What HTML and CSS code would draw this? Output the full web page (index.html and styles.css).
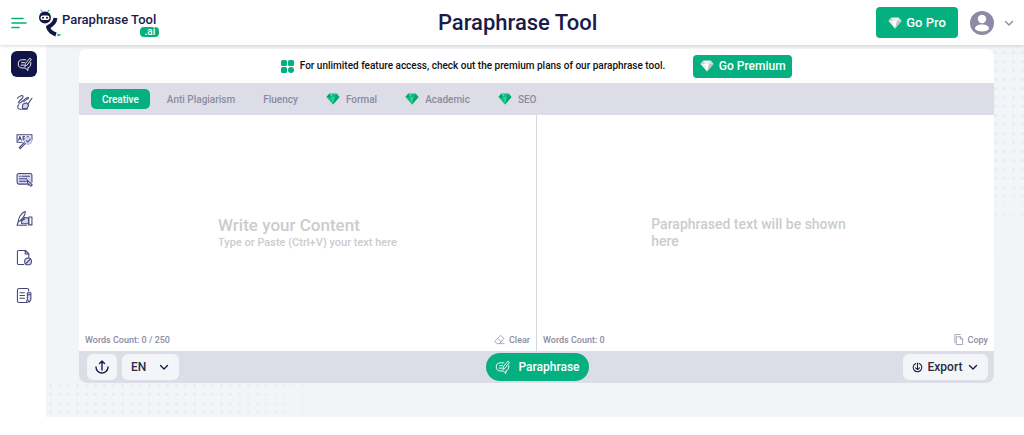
FILE: index.html
```html
<!doctype html>
<html lang="en">
<head>
  <meta charset="utf-8"/>
  <meta name="viewport" content="width=device-width, initial-scale=1"/>
  <title>Paraphrase Tool</title>
  <link rel="stylesheet" href="styles.css">
</head>
<body>
  <!-- shared icons -->
  <svg class="sprite" aria-hidden="true">
    <symbol id="gem" viewBox="0 0 28 24">
      <path d="M7 1h14l6 7-13 15L1 8z" fill="#0cbd83"/>
      <path d="M7 1l3 7H1z" fill="#069b68"/>
      <path d="M7 1h7l-4 7z" fill="#3bdcaa"/>
      <path d="M21 1l-3 7h9z" fill="#0aa873"/>
      <path d="M10 8h8l-4 15z" fill="#2fcf9d"/>
      <path d="M18 8h9L14 23z" fill="#06a36b"/>
    </symbol>
    <symbol id="gem-white" viewBox="0 0 28 24">
      <path d="M7 1h14l6 7-13 15L1 8z" fill="#eef1f0"/>
      <path d="M7 1l3 7H1z" fill="#cfd3d2"/>
      <path d="M21 1l-3 7h9z" fill="#d9dcdb"/>
      <path d="M10 8h8l-4 15z" fill="#fff"/>
      <path d="M18 8h9L14 23z" fill="#bfc5c3"/>
    </symbol>
    <symbol id="rewrite" viewBox="0 0 24 24">
      <path d="M14 4.500H8.500a6.500 6.500 0 0 0 0 13H13l4.500 4v-4.500c3-.8 4.500-3 4.500-6V9"/>
      <path d="M7.500 9H12M6.500 13h4.500"/>
      <path d="M12.500 14.500l1-4L20.500 2l2.500 2-7 9z"/>
    </symbol>
    <symbol id="chevron" viewBox="0 0 12 12">
      <path d="M2.500 4.500L6 8l3.500-3.500"/>
    </symbol>
  </svg>

  <header class="header">
    <div class="brand">
      <button class="menu" aria-label="Menu">
        <svg viewBox="0 0 16 12"><path d="M1 1.500h11M1 6h14M1 10.500h7"/></svg>
      </button>
      <a class="logo" href="#">
        <svg viewBox="0 0 24 28">
          <path d="M4.500 3.500L3 1M9.500 3.500L11 1" fill="none" stroke="#04b483" stroke-width="1"/>
          <path d="M17.500 9c-.5 4-3 7-7.500 9 1 3.500 3.500 6 8 7.500" fill="none" stroke="#141644" stroke-width="4" stroke-linecap="butt"/>
          <circle cx="7" cy="8.500" r="6" fill="#141644"/>
          <rect x="2.500" y="6.500" width="9" height="4.500" rx="2.200" fill="#fff"/>
          <circle cx="5" cy="8.700" r="1" fill="#141644"/>
          <circle cx="9" cy="8.700" r="1" fill="#141644"/>
          <path d="M19.500 24.500l4 1.500-4 1.500z" fill="#04b483"/>
        </svg>
        <span class="logo-text">
          <span class="logo-name">Paraphrase Tool</span>
          <span class="logo-tag">.ai</span>
        </span>
      </a>
    </div>
    <h1 class="title">Paraphrase Tool</h1>
    <div class="account">
      <button class="btn btn-pro"><svg class="gem"><use href="#gem-white"/></svg>Go Pro</button>
      <button class="profile" aria-label="Account">
        <svg class="avatar" viewBox="0 0 24 24">
          <circle cx="12" cy="12" r="12" fill="#8d8aa6"/>
          <circle cx="12" cy="8" r="4.200" fill="#fff"/>
          <path d="M5 18c0-3 2.500-4.500 7-4.500s7 1.500 7 4.500c-2 1.800-4 2.500-7 2.500S7 19.800 5 18z" fill="#fff"/>
        </svg>
        <svg class="chevron"><use href="#chevron"/></svg>
      </button>
    </div>
  </header>

  <div class="page">
    <nav class="sidebar" aria-label="Tools">
      <a class="tool active" href="#" aria-label="Paraphrase"><svg><use href="#rewrite"/></svg></a>
      <a class="tool" href="#" aria-label="Rewriter">
        <svg viewBox="0 0 24 24">
          <path d="M2 6c3-4 8-5 8-2S2 10 4 12.500 14 4 17 5s-4 3-6 6"/>
          <path d="M4 15c-3 3-2 6 3 7"/>
          <path class="tint" d="M9.500 14.500l5.500-2 3 3.500-3 5H9z"/>
          <path d="M17 14l5.500-8M9 21h7"/>
        </svg>
      </a>
      <a class="tool" href="#" aria-label="Grammar checker">
        <svg viewBox="0 0 24 24">
          <path d="M9 13H1.500V2.500h21V10"/>
          <path d="M3.500 10L5.500 5l2 5M4.500 8.500h2M10 5v5h2.500M10 5h2M10 7.500h2.500M18 5.500h-2.500v4"/>
          <circle class="tint pale" cx="17" cy="11" r="5"/>
          <path d="M15 11l1.500 1.500L20 9M13 15l-7 7-1.500-1.500 7-7"/>
        </svg>
      </a>
      <a class="tool" href="#" aria-label="Summarizer">
        <svg viewBox="0 0 24 24">
          <path class="tint" d="M15 18.500H4A2.500 2.500 0 0 1 1.500 16V6A2.500 2.500 0 0 1 4 3.500h16A2.500 2.500 0 0 1 22.500 6v10"/>
          <path d="M5 7.500h1M8.500 7.500H19M5 11h10M5 14.500h9"/>
          <path class="tint" d="M15.500 12.500l7.500 7-2 2-3-3-1 1.500z"/>
        </svg>
      </a>
      <a class="tool" href="#" aria-label="Essay writer">
        <svg viewBox="0 0 24 24">
          <path class="tint" d="M18 11.500l-6-1-4 5v4h10z"/>
          <path d="M18 10h4.500v11H18zM3 17C4 10 8 4 13 2c1 4-3 9-7 13zM3 17l-1.500 4.500H15M6 15l6-2"/>
        </svg>
      </a>
      <a class="tool" href="#" aria-label="Plagiarism remover">
        <svg viewBox="0 0 24 24">
          <path d="M11 22H4a2 2 0 0 1-2-2V4a2 2 0 0 1 2-2h9l5 5v5"/>
          <path class="tint" d="M13 2v5h5z"/>
          <circle class="tint" cx="17" cy="17.500" r="4.800"/>
          <path d="M13.800 20.800l6.500-6.500"/>
        </svg>
      </a>
      <a class="tool" href="#" aria-label="Article writer">
        <svg viewBox="0 0 24 24">
          <path d="M16 22H4.500A2.500 2.500 0 0 1 2 19.500v-15A2.500 2.500 0 0 1 4.500 2h11A2.500 2.500 0 0 1 18 4.500V6M16 22c-1 0-1-2-1-3"/>
          <path d="M5.500 8H12M5.500 12H12M5.500 16H12"/>
          <path class="tint" d="M16 8h5v10l-2.500 3.500L16 18zM16 11h5"/>
        </svg>
      </a>
    </nav>

    <main class="main">
      <section class="card">
        <div class="banner">
          <svg class="grid-icon" viewBox="0 0 13 13">
            <rect width="6" height="6" rx="1.500"/><rect x="7" width="6" height="6" rx="1.500"/>
            <rect y="7" width="6" height="6" rx="1.500"/><circle cx="10" cy="10" r="3"/>
          </svg>
          <p class="banner-text">For unlimited feature access, check out the premium plans of our paraphrase tool.</p>
          <button class="btn btn-premium"><svg class="gem"><use href="#gem-white"/></svg>Go Premium</button>
        </div>

        <div class="modes">
          <button class="mode selected">Creative</button>
          <button class="mode">Anti Plagiarism</button>
          <button class="mode">Fluency</button>
          <button class="mode"><svg class="gem"><use href="#gem"/></svg>Formal</button>
          <button class="mode"><svg class="gem"><use href="#gem"/></svg>Academic</button>
          <button class="mode"><svg class="gem"><use href="#gem"/></svg>SEO</button>
        </div>

        <div class="panes">
          <div class="pane">
            <div class="pane-body">
              <textarea class="input" id="content"></textarea>
              <label class="hint" for="content">
                <span class="hint-title">Write your Content</span>
                <span class="hint-text">Type or Paste (Ctrl+V) your text here</span>
              </label>
            </div>
            <div class="pane-foot">
              <span>Words Count: 0 / 250</span>
              <button class="link">
                <svg viewBox="0 0 12 12"><path d="M2 7l5-5.500L11 5 6 10.500H3.500L1 8.500zM4 5l4 3.500M6 10.500h5"/></svg>Clear
              </button>
            </div>
          </div>
          <div class="pane">
            <div class="pane-body">
              <p class="result">Paraphrased text will be shown here</p>
            </div>
            <div class="pane-foot">
              <span>Words Count: 0</span>
              <button class="link">
                <svg viewBox="0 0 12 12"><path d="M4 3h4l2.500 2.500v6H4zM8 3v2.500h2.500M2 9.500v-9h6"/></svg>Copy
              </button>
            </div>
          </div>
        </div>

        <div class="actions">
          <div class="actions-side">
            <button class="tile upload" aria-label="Upload">
              <svg viewBox="0 0 16 16"><path d="M8 11V2M5.500 4.500L8 2l2.500 2.500M2 8a6 6 0 0 0 12 0"/></svg>
            </button>
            <div class="tile lang">
              <select class="lang-select" aria-label="Language">
                <option>EN</option>
              </select>
              <svg class="chevron"><use href="#chevron"/></svg>
            </div>
          </div>
          <button class="btn btn-run"><svg><use href="#rewrite"/></svg>Paraphrase</button>
          <div class="actions-side end">
            <button class="tile export">
              <svg viewBox="0 0 16 16"><path d="M5.500 2.200a6.300 6.300 0 1 0 5 0M8 1.500V11M5 8.500L8 11l3-2.500"/></svg>
              Export
              <svg class="chevron"><use href="#chevron"/></svg>
            </button>
          </div>
        </div>
      </section>
    </main>
  </div>
</body>
</html>
```

FILE: styles.css
```css
:root {
  --green: #04b07f;
  --navy: #191b4a;
  --bar: #dddde7;
  --muted: #8c8ba0;
  --page: #f2f4f7;
}
* {
  box-sizing: border-box;
}
body {
  margin: 0;
  background: #fff;
  color: #222;
  font-family: Roboto, "Liberation Sans", sans-serif;
  font-weight: 500;
}
h1, p {
  margin: 0;
}
button, select, textarea {
  margin: 0;
  padding: 0;
  border: 0;
  background: none;
  color: inherit;
  font: inherit;
}
button {
  cursor: pointer;
}
svg {
  display: block;
  flex: none;
  fill: none;
  stroke-linecap: round;
  stroke-linejoin: round;
}
.sprite {
  position: absolute;
  width: 0;
  height: 0;
}
.gem {
  width: 14px;
  height: 12px;
}
.chevron {
  width: 12px;
  height: 12px;
  stroke: currentColor;
  stroke-width: 1.4;
}

/* header */
.header {
  position: relative;
  display: flex;
  align-items: center;
  justify-content: space-between;
  height: 45px;
  padding: 0 9px 0 11px;
  background: #fff;
  box-shadow: 0 1px 3px rgba(0, 0, 0, .16);
}
.brand {
  display: flex;
  align-items: center;
  gap: 11px;
}
.menu svg {
  width: 16px;
  height: 12px;
  stroke: var(--green);
  stroke-width: 1.6;
}
.logo {
  display: flex;
  color: var(--navy);
  text-decoration: none;
}
.logo svg {
  width: 24px;
  height: 28px;
}
.logo-text {
  display: flex;
  flex-direction: column;
  align-items: flex-end;
  padding-top: 3px;
}
.logo-name {
  padding-right: 3px;
  font-size: 13px;
  line-height: 15px;
}
.logo-tag {
  padding: 0 4px;
  border-radius: 4px;
  background: var(--green);
  color: #fff;
  font-size: 10px;
  line-height: 10px;
}
.title {
  color: var(--navy);
  font-size: 22px;
  line-height: 28px;
  font-weight: 500;
}
.account, .profile {
  display: flex;
  align-items: center;
}
.account {
  gap: 12px;
}
.profile {
  gap: 9px;
  color: var(--muted);
}
.avatar {
  width: 24px;
  height: 24px;
}
.btn {
  display: flex;
  align-items: center;
  justify-content: center;
  border-radius: 4px;
  background: var(--green);
  color: #fff;
}
.btn-pro {
  gap: 4px;
  width: 82px;
  height: 31px;
  font-size: 13px;
}

/* sidebar */
.page {
  display: flex;
  min-height: calc(100vh - 45px);
}
.sidebar {
  display: flex;
  flex: none;
  flex-direction: column;
  justify-content: space-between;
  align-items: center;
  width: 46px;
  height: 264px;
  padding: 6px 0 0 2px;
}
.tool {
  display: grid;
  place-items: center;
  width: 26px;
  height: 26px;
  border-radius: 6px;
  color: #45467a;
}
.tool svg {
  width: 17px;
  height: 17px;
  stroke: currentColor;
  stroke-width: 1.5;
}
.tool .tint {
  fill: #d5d5f2;
}
.tool .pale {
  stroke: #b9b9e0;
}
.tool.active {
  background: #111447;
  color: #fff;
}
.tool.active svg {
  width: 15px;
  height: 15px;
}

/* editor, dots only show under the card and in the top right corner */
.main {
  flex: 1;
  align-self: flex-start;
  padding: 4px 30px 34px 33px;
  background:
    linear-gradient(var(--page), var(--page)) 0 0 / 50% calc(100% - 36px) no-repeat,
    linear-gradient(90deg, transparent 16%, var(--page) 34%) 0 100% / 100% 36px no-repeat,
    linear-gradient(transparent 30%, var(--page) 60%) 100% 0 / 50% 100% no-repeat,
    radial-gradient(circle, #e8ebef 1px, transparent 2px) 0 100% / 9px 9px,
    var(--page);
}
.card {
  border-radius: 8px;
  background: #fff;
  overflow: hidden;
}
.banner {
  display: flex;
  align-items: center;
  justify-content: center;
  height: 34px;
}
.grid-icon {
  width: 13px;
  height: 13px;
  margin-right: 6px;
  fill: var(--green);
}
.banner-text {
  margin-right: 28px;
  color: #111;
  font-size: 10px;
  line-height: 14px;
}
.btn-premium {
  gap: 5px;
  width: 99px;
  height: 23px;
  font-size: 12px;
}
.modes {
  display: flex;
  align-items: center;
  gap: 6px;
  height: 32px;
  padding: 0 12px;
  background: var(--bar);
}
.mode {
  display: flex;
  align-items: center;
  gap: 6px;
  height: 20px;
  padding: 0 11px;
  border-radius: 5px;
  color: var(--muted);
  font-size: 10px;
}
.mode.selected {
  background: var(--green);
  color: #fff;
}
.panes {
  display: flex;
}
.pane {
  display: flex;
  flex: 1;
  flex-direction: column;
  min-height: 236px;
}
.pane + .pane {
  border-left: 1px solid #d6d6de;
}
.pane-body {
  display: grid;
  flex: 1;
  place-items: center;
}
.input {
  grid-area: 1 / 1;
  align-self: stretch;
  justify-self: stretch;
  padding: 12px;
  outline: 0;
  resize: none;
}
.hint {
  display: flex;
  grid-area: 1 / 1;
  flex-direction: column;
  padding-top: 22px;
  color: #ccc;
  cursor: text;
}
.input:focus + .hint {
  visibility: hidden;
}
.hint-title {
  font-size: 17px;
  line-height: 20px;
}
.hint-text {
  font-size: 11px;
  line-height: 16px;
}
.result {
  width: 50%;
  padding: 22px 20px 0 0;
  color: #ccc;
  font-size: 14px;
  line-height: 17px;
}
.pane-foot {
  display: flex;
  align-items: center;
  justify-content: space-between;
  height: 23px;
  padding: 0 6px;
  color: var(--muted);
  font-size: 9px;
}
.link {
  display: flex;
  align-items: center;
  gap: 4px;
}
.link svg {
  width: 11px;
  height: 11px;
  stroke: currentColor;
  stroke-width: .8;
}
.actions {
  display: flex;
  align-items: center;
  height: 32px;
  padding: 0 6px 0 8px;
  background: var(--bar);
}
.actions-side {
  display: flex;
  flex: 1;
  gap: 5px;
}
.actions-side.end {
  justify-content: flex-end;
}
.tile {
  display: flex;
  align-items: center;
  height: 26px;
  border-radius: 6px;
  background: #f4f5f9;
  color: #292a45;
  font-size: 12px;
}
.tile svg {
  stroke: var(--navy);
}
.upload {
  justify-content: center;
  width: 30px;
}
.upload svg {
  width: 16px;
  height: 16px;
  stroke-width: 1.4;
}
.lang {
  position: relative;
  width: 57px;
}
.lang-select {
  width: 100%;
  height: 100%;
  padding-left: 9px;
  appearance: none;
}
.lang .chevron {
  position: absolute;
  right: 9px;
  pointer-events: none;
}
.btn-run {
  gap: 8px;
  width: 103px;
  height: 28px;
  border-radius: 14px;
  font-size: 12px;
}
.btn-run svg {
  width: 15px;
  height: 15px;
  stroke: #fff;
  stroke-width: 1.5;
}
.export {
  justify-content: center;
  gap: 5px;
  width: 85px;
}
.export svg:first-child {
  width: 11px;
  height: 11px;
  stroke-width: 1.6;
}
```
